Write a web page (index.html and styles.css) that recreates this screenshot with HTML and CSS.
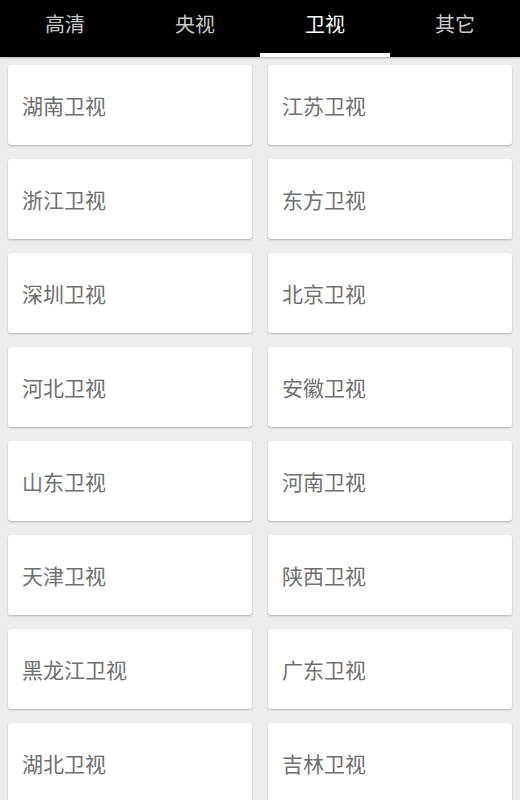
FILE: index.html
```html
<!DOCTYPE html>
<html lang="zh-CN">
<head>
  <meta charset="UTF-8">
  <title>卫视</title>
  <link rel="stylesheet" href="styles.css">
</head>
<body>
  <div class="tabs">
    <div class="tab">高清</div>
    <div class="tab">央视</div>
    <div class="tab active">卫视</div>
    <div class="tab">其它</div>
  </div>
  <div class="grid">
    <div class="card">湖南卫视</div>
    <div class="card">江苏卫视</div>
    <div class="card">浙江卫视</div>
    <div class="card">东方卫视</div>
    <div class="card">深圳卫视</div>
    <div class="card">北京卫视</div>
    <div class="card">河北卫视</div>
    <div class="card">安徽卫视</div>
    <div class="card">山东卫视</div>
    <div class="card">河南卫视</div>
    <div class="card">天津卫视</div>
    <div class="card">陕西卫视</div>
    <div class="card">黑龙江卫视</div>
    <div class="card">广东卫视</div>
    <div class="card">湖北卫视</div>
    <div class="card">吉林卫视</div>
  </div>
</body>
</html>
```

FILE: styles.css
```css
html, body {
  margin: 0;
  padding: 0;
  height: 100%;
  overflow: hidden;
  background: #ededed;
  font-family: "Noto Sans CJK SC", "Noto Sans", sans-serif;
}
.tabs {
  display: flex;
  height: 57px;
  background: #000;
  box-shadow: 0 1px 2px rgba(0,0,0,0.25);
}
.tab {
  flex: 1;
  box-sizing: border-box;
  height: 57px;
  line-height: 48px;
  text-align: center;
  font-size: 20px;
  color: #c8c8c8;
  border-bottom: 4px solid transparent;
}
.tab.active {
  color: #fff;
  border-bottom-color: #fff;
}
.grid {
  display: grid;
  grid-template-columns: 1fr 1fr;
  column-gap: 16px;
  row-gap: 14px;
  padding: 8px 8px;
}
.card {
  height: 80px;
  display: flex;
  align-items: center;
  padding-left: 14px;
  background: #fff;
  border-radius: 3px;
  box-shadow: 0 1px 2px rgba(0,0,0,0.25);
  font-size: 21px;
  color: #707070;
}
```
